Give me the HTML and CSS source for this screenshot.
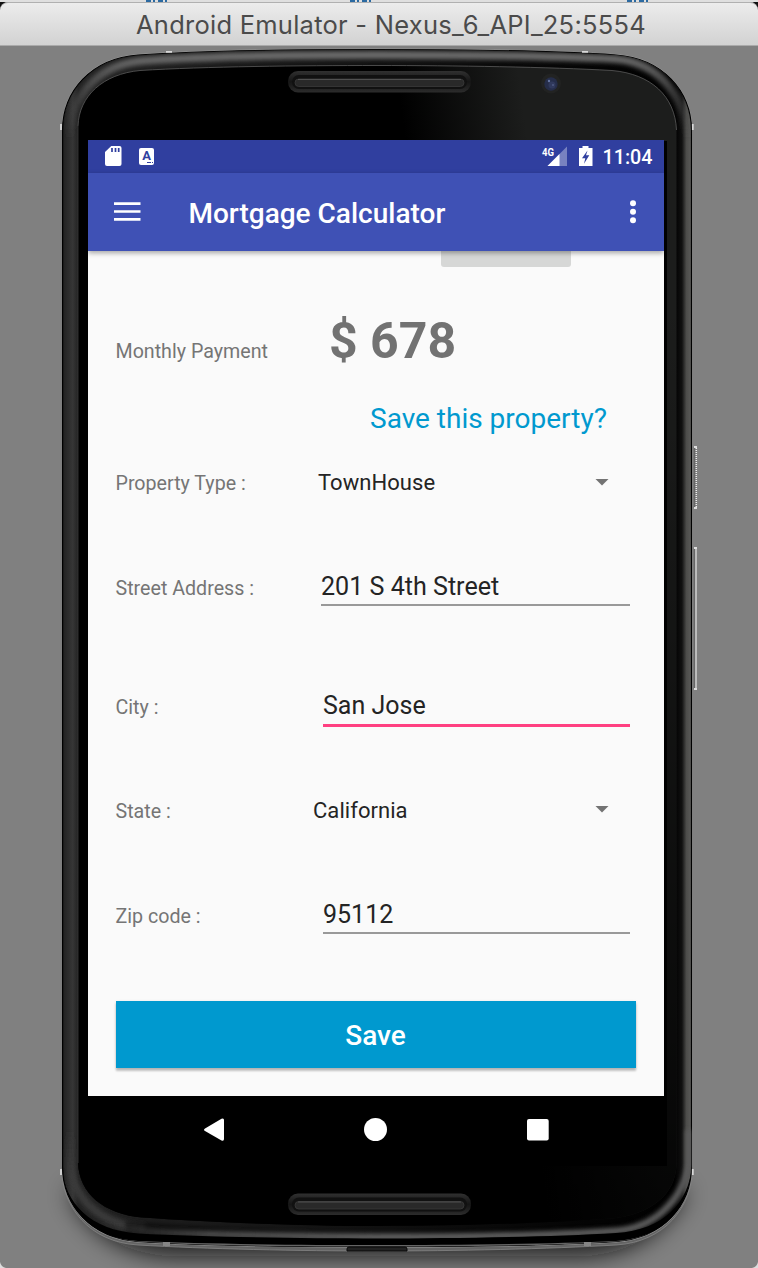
FILE: index.html
```html
<!DOCTYPE html>
<html lang="en">
<head>
<meta charset="utf-8">
<title>Android Emulator</title>
<link rel="stylesheet" href="styles.css">
</head>
<body>
<div class="window">
  <div class="behind">
    <svg width="758" height="8" viewBox="0 0 758 8">
      <path d="M0 0H8L0 8ZM758 0v8l-6-7z" fill="#111"/>
      <path d="M0 0H758V2H0Z" fill="#dfdfdf"/>
      <path d="M146 1h23M350 1h23M627 1h23" stroke="#2b6aa2" stroke-width="2" stroke-dasharray="5 2 2 3"/>
    </svg>
  </div>
  <header class="titlebar"><span class="window-title">Android Emulator - Nexus_6_API_25:5554</span></header>
  <main class="stage">
    <svg class="device" width="758" height="1222" viewBox="0 46 758 1222">
      <defs>
        <path id="body" d="M62.500 130C63 91 91 58.500 138 55C205 50.500 300 49.500 377 49.500C454 49.500 549 50.500 616 55C663 58.500 691 91 691.500 130V1167C691 1205 664 1238 616 1241.500C549 1246 454 1246.500 377 1246.500C300 1246.500 205 1246 138 1241.500C90 1238 63 1205 62.500 1167Z"/>
        <path id="glass" d="M78 126C79 96 103 74 140 70.500C205 66.500 300 65.500 377 65.500C454 65.500 549 67 612 70.500C651 74 675 96 676.500 130V1165C675 1195 651 1214 612 1218.500C549 1223 454 1226 377 1226C300 1226 205 1222 142 1217.500C103 1214 79 1193 78 1163Z"/>
        <clipPath id="bodyClip"><use href="#body"/></clipPath>
        <linearGradient id="bezel" x1="62" x2="692" y1="0" y2="0" gradientUnits="userSpaceOnUse">
          <stop offset="0" stop-color="#111"/><stop offset=".004" stop-color="#252525"/><stop offset=".017" stop-color="#363636"/><stop offset=".026" stop-color="#222"/>
          <stop offset=".972" stop-color="#000"/><stop offset=".984" stop-color="#101010"/><stop offset=".991" stop-color="#4c4c4a"/><stop offset="1" stop-color="#5c5c5a"/>
        </linearGradient>
        <linearGradient id="shineX" x1="400" x2="520" y1="100" y2="84" gradientUnits="userSpaceOnUse"><stop offset="0" stop-color="#000"/><stop offset="1" stop-color="#1c1d1c"/></linearGradient>
        <linearGradient id="shineY" x1="0" x2="0" y1="300" y2="1200" gradientUnits="userSpaceOnUse"><stop offset="0" stop-opacity="0"/><stop offset="1" stop-opacity=".8"/></linearGradient>
        <linearGradient id="groove" x1="0" x2="0" y1="0" y2="1"><stop offset="0" stop-color="#303030"/><stop offset=".5" stop-color="#151515"/><stop offset="1" stop-color="#2c2c2c"/></linearGradient>
        <linearGradient id="topLight" x1="0" x2="0" y1="56" y2="140" gradientUnits="userSpaceOnUse"><stop offset="0" stop-color="#6a6a6a"/><stop offset=".2" stop-color="#555"/><stop offset="1" stop-color="#444" stop-opacity="0"/></linearGradient>
        <linearGradient id="lowLight" x1="90" x2="680" y1="0" y2="0" gradientUnits="userSpaceOnUse"><stop offset="0" stop-color="#3a3a3a" stop-opacity="0"/><stop offset=".2" stop-color="#484848"/><stop offset=".5" stop-color="#606060"/><stop offset="1" stop-color="#5a5a5a"/></linearGradient>
        <linearGradient id="sideFade" x1="0" x2="0" y1="1130" y2="1175" gradientUnits="userSpaceOnUse"><stop offset="0" stop-color="#3a3a3a" stop-opacity="0"/><stop offset="1" stop-color="#3a3a3a"/></linearGradient>
        <filter id="blur2" x="-10%" y="-20%" width="120%" height="140%"><feGaussianBlur stdDeviation="2"/></filter>
        <filter id="blur12" x="-20%" y="-100%" width="140%" height="300%"><feGaussianBlur stdDeviation="12"/></filter>
      </defs>
      <path d="M68 1190Q98 1252 170 1256H584Q655 1252 687 1190Z" fill="#111" opacity=".85" filter="url(#blur12)"/>
      <path d="M61 1167C62 1207 89 1242 138 1245C205 1249 300 1251 377 1251C454 1251 549 1249 616 1245C665 1242 692 1207 693 1167" fill="#646464" stroke="#858585" stroke-width=".8"/>
      <use href="#body" fill="#000" stroke="#999" stroke-width="2"/>
      <use href="#body" fill="url(#bezel)" stroke="#000" stroke-width="1.200"/>
      <g clip-path="url(#bodyClip)">
        <path d="M69 150C68 95 98 65 142 61C210 56 300 55 377 55C454 55 549 56 614 59C659 62 687 95 688 150" fill="none" stroke="url(#topLight)" stroke-width="8" filter="url(#blur2)"/>
        <path d="M70 1130V1160C71 1198 100 1225 145 1228" fill="none" stroke="url(#sideFade)" stroke-width="8" filter="url(#blur2)"/>
        <path d="M125 1221C205 1228 300 1231 377 1231C454 1231 549 1228 630 1221L630 1260H125Z" fill="#000" filter="url(#blur2)" opacity=".5"/>
        <path d="M100 1224C120 1234 205 1235 377 1237C454 1237 549 1236 616 1231C655 1228 682 1200 689 1165V1130" fill="none" stroke="url(#lowLight)" stroke-width="7" filter="url(#blur2)"/>
        <path d="M62 1168C65 1203 90 1230 138 1233.500C205 1237 300 1238.500 377 1238.500C454 1238.500 549 1237 616 1233C664 1230 689 1203 692 1165V1260H60Z" fill="#000"/>
        <path d="M60 1180C67 1213 94 1239 138 1241C205 1244 300 1245 377 1245C454 1245 549 1244 616 1241C660 1238 687 1213 694 1180V1260H60Z" fill="#646464"/>
      </g>
      <use href="#glass" fill="url(#shineX)"/>
      <use href="#glass" fill="url(#shineY)"/>
      <path d="M78 126C79 96 103 74 140 70.500C205 66.500 300 65.500 377 65.500C454 65.500 549 67 612 70.500C651 74 675 96 676.500 130" fill="none" stroke="#5a5a5a" stroke-width=".8"/>
      <path d="M78 126V1163" stroke="#3b3b3b" stroke-width=".8"/>
      <path d="M664 141h3v1025H88v-70h576z" fill="#000"/>
      <g id="speaker">
        <rect x="288" y="71" width="183" height="21.500" rx="10" fill="url(#groove)"/>
        <rect x="292" y="75" width="175" height="14" rx="7" fill="#111"/>
        <rect x="295" y="79" width="169" height="7.500" rx="3.700" fill="#292929" stroke="#3b3b3b" stroke-width=".8"/>
        <path d="M298 79.500H461" stroke="#505050"/>
      </g>
      <use href="#speaker" y="1122.500"/>
      <circle cx="551" cy="83.500" r="10" fill="#222322"/><circle cx="551" cy="84" r="6.700" fill="#252d49"/><circle cx="552" cy="85" r="3.500" fill="#30395c"/><circle cx="549" cy="81" r="1.200" fill="#6373a0"/><circle cx="553" cy="85" r=".7" fill="#6c7ba8"/>
      <path d="M166 51.800h6M582 51.800h6M61 124v6M692.800 124v6M61 1169v6M692.800 1169v6" stroke="#d8d8d8" stroke-width="1.800"/>
      <path d="M163 1244h7M584 1244h7" stroke="#858585" stroke-width="4"/>
      <path d="M347 1251v-2q0-2 2-2h56q2 0 2 2v2z" fill="#222" stroke="#080808"/>
      <path d="M694.500 447v61M694.500 548v141" stroke="#666" stroke-width="1.500"/>
      <path d="M696.300 448v60" stroke="#eee" stroke-width="1.500" stroke-dasharray="1 1"/>
      <path d="M696 549v140" stroke="#e6e6e6" stroke-width="1.200"/>
      <path d="M694 447h3M694 508h3M694 548h3M694 689h3" stroke="#ddd" stroke-width="2"/>
      <path d="M0 1262v6h6q-5-1-6-6M758 1262v6h-6q5-1 6-6" fill="#ddd"/>
    </svg>
    <section class="screen">
      <div class="status">
        <svg class="status-left" width="51" height="33" viewBox="0 0 51 33">
          <path d="M23.300 6H31.500q2 0 2 2V24q0 2-2 2H19q-2 0-2-2V12z" fill="#fff"/>
          <path d="M24 8v4M27.500 8v4M30.700 8v4" stroke="#303f9f" stroke-width="1.700"/>
        </svg>
        <span class="ime"><b>A</b></span>
        <svg class="signals" width="54" height="33" viewBox="0 0 54 33">
          <path d="M27 6.500V26H7.500z" fill="#fff" opacity=".35"/><path d="M19.500 14V26H7.500z" fill="#fff"/>
          <path d="M42.500 6h6v2h4v18h-13.500V8H42.500z" fill="#fff"/><path d="M47.500 10.500l-5.500 7.800h3.300l-1.300 5.500 5.300-8.500h-3.300z" fill="#303f9f"/>
          <text class="network" x="2" y="15.500" textLength="12" lengthAdjust="spacingAndGlyphs">4G</text>
        </svg>
        <span class="clock">11:04</span>
      </div>
      <div class="appbar">
        <svg width="27" height="20" viewBox="0 0 27 20"><path d="M0 1.700H26.500M0 9.500H26.500M0 17.300H26.500" stroke="#fff" stroke-width="2.700"/></svg>
        <h1 class="app-title">Mortgage Calculator</h1>
        <svg class="more" width="8" height="24" viewBox="0 0 8 24"><g fill="#fff"><circle cx="4" cy="3.300" r="3"/><circle cx="4" cy="11.800" r="3"/><circle cx="4" cy="20.300" r="3"/></g></svg>
      </div>
      <div class="content">
        <div class="button-edge"></div>
        <div class="row payment"><span class="label">Monthly Payment</span><strong class="amount">$ 678</strong></div>
        <div class="prompt"><span>Save this property?</span></div>
        <div class="row type"><span class="label">Property Type :</span><span class="value select">TownHouse</span><i class="arrow"></i></div>
        <div class="row street"><span class="label">Street Address :</span><span class="value input">201 S 4th Street</span></div>
        <div class="row city"><span class="label">City :</span><span class="value input focused">San Jose</span></div>
        <div class="row state"><span class="label">State :</span><span class="value select">California</span><i class="arrow"></i></div>
        <div class="row zip"><span class="label">Zip code :</span><span class="value input">95112</span></div>
        <button class="save">Save</button>
      </div>
      <nav class="navigation">
        <svg width="576" height="70" viewBox="0 0 576 70"><g fill="#fff"><path d="M117 32.500L133.500 22.700q2.500-1 2.500 1.300V43q0 2.500-2.500 1.500L117 35q-2-1.200 0-2.500"/><circle cx="287.500" cy="33.500" r="11.500"/><rect x="439" y="23" width="21.700" height="21.500" rx="2"/></g></svg>
      </nav>
    </section>
  </main>
</div>
</body>
</html>
```
FILE: styles.css
```css
* { box-sizing: border-box; }
body { margin: 0; background: #808080; font-family: Roboto, "Liberation Sans", sans-serif; }
.window { position: relative; width: 758px; height: 1268px; overflow: hidden; background: #808080; }
.behind { height: 2px; background: #dfdfdf; }
.behind svg { display: block; }
.titlebar { position: relative; height: 44px; border-top: 1px solid #b0b0b0; border-bottom: 1px solid #aaa; border-radius: 8px 8px 0 0; background: linear-gradient(#ececec, #d2d2d2); }
.window-title { display: block; padding: 0 0 0 136px; font: 25.5px/43px Inter, sans-serif; color: #4b4b4b; white-space: nowrap; letter-spacing: .25px; }
.stage { position: relative; height: 1222px; padding: 94px 0 0 88px; }
.device { position: absolute; left: 0; top: 0; }
.screen { position: relative; width: 576px; height: 1026px; }
.status { height: 33px; display: flex; background: #303f9f; color: #fff; }
.status-left { flex: none; }
.ime { display: block; width: 15px; height: 17px; margin-top: 8px; padding-bottom: 1px; border-radius: 2px; background: linear-gradient(90deg, transparent 55%, #303f9f 55% 65%, transparent 65% 70%, #303f9f 70% 80%, transparent 80% 85%, #303f9f 85% 93%, transparent 93%) 0 14px / 100% 1px no-repeat, #fff; color: #303f9f; text-align: center; font-size: 13px; line-height: 16px; }
.signals { margin-left: 386px; flex: none; }
.network { font: bold 11.5px Roboto, sans-serif; fill: #fff; }
.clock { margin-left: 8.5px; font-weight: 500; font-size: 19.7px; line-height: 35px; }
.appbar { position: relative; z-index: 1; height: 78px; display: flex; align-items: center; padding: 0 27px 0 25.5px; background: #3f51b5; box-shadow: 0 2px 5px rgba(0,0,0,.35); color: #fff; }
.app-title { margin: 3px 0 0 48px; font-size: 28px; font-weight: 500; line-height: 40px; white-space: nowrap; }
.more { margin-left: auto; }
.content { height: 845px; background: #fafafa; padding: 0 28px 0 27.5px; }
.button-edge { width: 130px; height: 16px; margin-left: 325.5px; border-radius: 0 0 3px 3px; background: #d6d7d6; }
.row { height: 40px; display: flex; align-items: baseline; }
.label { flex: none; width: 205px; color: #757575; font-size: 19.65px; line-height: 40px; white-space: nowrap; }
.payment { height: 60px; margin-top: 44px; }
.amount { margin-left: 8.5px; line-height: 60px; font-size: 50px; color: #727272; }
.prompt { height: 40px; margin-top: 28px; padding-left: 254.5px; line-height: 40px; font-size: 28px; color: #0099cf; white-space: nowrap; }
.type { margin-top: 24px; }
.value { color: #242424; line-height: 40px; white-space: nowrap; }
.select { width: 275px; font-size: 22px; letter-spacing: .05px; }
.type .select { margin-left: -2.5px; }
.state .select { margin-left: -7.5px; line-height: 42px; }
.arrow { width: 14px; height: 7px; margin: 0 27px 2px auto; align-self: center; background: #737373; clip-path: polygon(0 0, 100% 0, 50% 100%); }
.input { flex: 1; height: 41px; margin-right: 6px; border-bottom: 2px solid #999; font-size: 25px; line-height: 42px; margin-left: 2.5px; }
.street .input { margin-left: .5px; font-size: 25.1px; line-height: 43px; }
.focused { height: 42px; border-bottom: 3px solid #ff4081; }
.street { margin-top: 62px; }
.city { margin-top: 80px; }
.state { margin-top: 65px; }
.zip { margin-top: 63px; }
.zip .input { line-height: 43px; }
.save { display: block; width: 520px; height: 67px; margin-top: 68px; padding: 2px 0 0; border: 0; background: #0099cf; box-shadow: 0 3px 2px rgba(0,0,0,.2), 0 1px 3px rgba(0,0,0,.15); color: #fff; font: 500 28px Roboto, sans-serif; }
.navigation { height: 70px; background: #000; }
.navigation svg { display: block; }
```
